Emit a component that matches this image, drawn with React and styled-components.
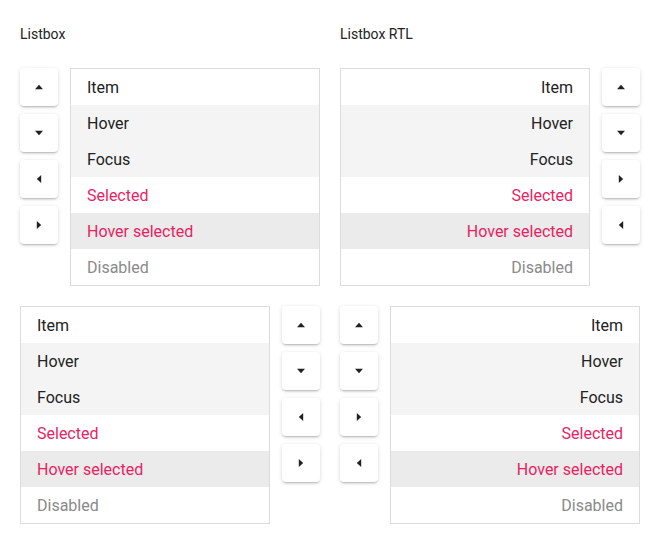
import React from "react";
import styled, { createGlobalStyle } from "styled-components";

const GlobalStyle = createGlobalStyle`
  html, body {
    margin: 0;
    padding: 0;
    background: #fff;
    font-family: Roboto, "Noto Sans", sans-serif;
  }
`;

const Page = styled.div`
  display: grid;
  grid-template-columns: 300px 300px;
  column-gap: 20px;
  row-gap: 20px;
  padding: 20px;
  width: 660px;
  box-sizing: border-box;
`;

const Title = styled.div`
  font-size: 14px;
  line-height: 28px;
  color: #222;
  margin-bottom: 20px;
`;

const Section = styled.div`
  display: flex;
  flex-direction: column;
`;

const Row = styled.div`
  display: flex;
  align-items: flex-start;
  gap: 12px;
  flex-direction: ${(p) => (p.$reverse ? "row-reverse" : "row")};
`;

const Buttons = styled.div`
  display: flex;
  flex-direction: column;
  gap: 8px;
`;

const ArrowButton = styled.button`
  width: 38px;
  height: 38px;
  padding: 0;
  border: none;
  border-radius: 4px;
  background: #fff;
  box-shadow: 0 2px 2px -1px rgba(0, 0, 0, 0.22), 0 1px 4px rgba(0, 0, 0, 0.14);
  display: flex;
  align-items: center;
  justify-content: center;
  cursor: pointer;
`;

const List = styled.ul`
  list-style: none;
  margin: 0;
  padding: 0;
  width: 250px;
  border: 1px solid #dcdcdc;
  box-sizing: border-box;
  direction: ${(p) => (p.$rtl ? "rtl" : "ltr")};
`;

const colors = {
  item: ["#fff", "#222"],
  hover: ["#f4f4f4", "#222"],
  focus: ["#f4f4f4", "#222"],
  selected: ["#fff", "#e91e63"],
  hoverSelected: ["#ebebeb", "#e91e63"],
  disabled: ["#fff", "#8a8a8a"],
};

const Option = styled.li`
  box-sizing: border-box;
  height: 36px;
  padding: 2px 16px 0;
  line-height: 34px;
  font-size: 16px;
  background: ${(p) => colors[p.$state][0]};
  color: ${(p) => colors[p.$state][1]};
`;

const rotations = { up: 0, down: 180, left: 270, right: 90 };

function Arrow({ dir }) {
  return (
    <svg width="8" height="8" viewBox="0 0 8 8" style={{ transform: `rotate(${rotations[dir]}deg)` }}>
      <path d="M4 1.8 L8 6.2 L0 6.2 Z" fill="#222" />
    </svg>
  );
}

const items = [
  ["Item", "item"],
  ["Hover", "hover"],
  ["Focus", "focus"],
  ["Selected", "selected"],
  ["Hover selected", "hoverSelected"],
  ["Disabled", "disabled"],
];

function Listbox({ rtl }) {
  return (
    <List $rtl={rtl}>
      {items.map(([label, state]) => (
        <Option key={state} $state={state}>
          {label}
        </Option>
      ))}
    </List>
  );
}

function Controls({ dirs }) {
  return (
    <Buttons>
      {dirs.map((d) => (
        <ArrowButton key={d}>
          <Arrow dir={d} />
        </ArrowButton>
      ))}
    </Buttons>
  );
}

const ltrDirs = ["up", "down", "left", "right"];
const rtlDirs = ["up", "down", "right", "left"];

export default function App() {
  return (
    <>
      <GlobalStyle />
      <Page>
        <Section>
          <Title>Listbox</Title>
          <Row>
            <Controls dirs={ltrDirs} />
            <Listbox />
          </Row>
        </Section>
        <Section>
          <Title>Listbox RTL</Title>
          <Row $reverse>
            <Controls dirs={rtlDirs} />
            <Listbox rtl />
          </Row>
        </Section>
        <Row>
          <Listbox />
          <Controls dirs={ltrDirs} />
        </Row>
        <Row $reverse>
          <Listbox rtl />
          <Controls dirs={rtlDirs} />
        </Row>
      </Page>
    </>
  );
}
